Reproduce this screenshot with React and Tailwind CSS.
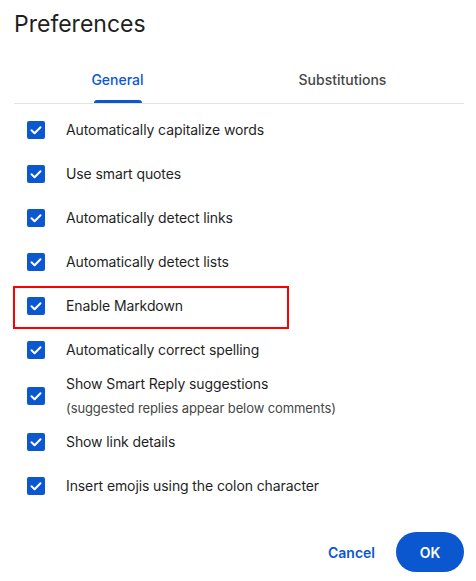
import React from "react";

const rows = [
  { label: "Automatically capitalize words" },
  { label: "Use smart quotes" },
  { label: "Automatically detect links" },
  { label: "Automatically detect lists" },
  { label: "Enable Markdown", marked: true },
  { label: "Automatically correct spelling" },
  { label: "Show Smart Reply suggestions", note: "(suggested replies appear below comments)" },
  { label: "Show link details" },
  { label: "Insert emojis using the colon character" },
];

function Check() {
  return (
    <span className="flex h-[18px] w-[18px] shrink-0 items-center justify-center rounded-[2px] bg-[#0b57d0]">
      <svg width="14" height="14" viewBox="0 0 14 14" fill="none">
        <path d="M2.5 7.2 L5.6 10.2 L11.5 4.2" stroke="white" strokeWidth="2" strokeLinecap="round" strokeLinejoin="round" />
      </svg>
    </span>
  );
}

function Row({ label, note, marked }) {
  return (
    <div className={`relative flex items-center pl-[27px] ${note ? "h-[48px]" : "h-[44px]"}`}>
      <Check />
      <div className="ml-[21px] flex flex-col">
        <span className="text-[14px] leading-[24px] tracking-[-0.1px] text-[#1f1f1f]">{label}</span>
        {note && <span className="text-[13px] leading-[24px] tracking-[-0.1px] text-[#444746]">{note}</span>}
      </div>
      {marked && (
        <div className="pointer-events-none absolute left-[13px] top-[2px] h-[43px] w-[276px] border-2 border-[#ff0000]" />
      )}
    </div>
  );
}

export default function App() {
  return (
    <div className="h-[581px] w-[476px] bg-white font-['Inter',sans-serif]">
      <h1 className="pl-[14px] pt-[8px] text-[23px] leading-[32px] text-[#1f1f1f]">Preferences</h1>
      <div className="mt-[20px] flex pl-[5px]">
        <div className="flex w-[225px] flex-col items-center">
          <span className="h-[40px] pt-[9px] text-[14px] font-medium leading-[22px] text-[#0b57d0]">General</span>
          <span className="h-[3px] w-[48px] rounded-t-[3px] bg-[#0b57d0]" />
        </div>
        <div className="flex w-[225px] flex-col items-center">
          <span className="h-[40px] pt-[9px] text-[14px] font-medium leading-[22px] text-[#444746]">Substitutions</span>
        </div>
      </div>
      <div className="mx-[14px] w-[450px] border-t border-[#e3e3e3]" />
      <div className="pt-[4px]">
        {rows.map((r) => (
          <Row key={r.label} {...r} />
        ))}
      </div>
      <div className="mt-[24px] flex items-center justify-end pr-[12px]">
        <button className="mr-[21px] text-[14px] font-semibold text-[#0b57d0]">Cancel</button>
        <button className="h-[40px] w-[68px] rounded-full bg-[#0b57d0] text-[14px] font-semibold text-white">OK</button>
      </div>
    </div>
  );
}
